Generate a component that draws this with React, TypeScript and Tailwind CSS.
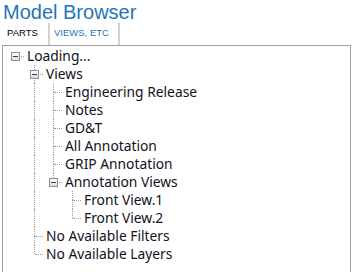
import React from "react";

type Node = { label: string; children?: Node[] };

const tree: Node = {
  label: "Loading...",
  children: [
    {
      label: "Views",
      children: [
        { label: "Engineering Release" },
        { label: "Notes" },
        { label: "GD&T" },
        { label: "All Annotation" },
        { label: "GRIP Annotation" },
        {
          label: "Annotation Views",
          children: [{ label: "Front View.1" }, { label: "Front View.2" }],
        },
      ],
    },
    { label: "No Available Filters" },
    { label: "No Available Layers" },
  ],
};

type Row = { node: Node; depth: number; guides: boolean[]; last: boolean; root: boolean };

function flatten(node: Node, depth: number, guides: boolean[], last: boolean, root: boolean, out: Row[]) {
  out.push({ node, depth, guides, last, root });
  const kids = node.children ?? [];
  kids.forEach((k, i) =>
    flatten(k, depth + 1, root ? guides : [...guides, !last], i === kids.length - 1, false, out)
  );
  return out;
}

function Expander() {
  return (
    <span className="absolute left-[6px] top-[5px] w-[9px] h-[9px] border border-[#919191] bg-gradient-to-b from-white to-[#dcdcdc] flex items-center justify-center">
      <span className="w-[5px] h-px bg-[#2b3a8f]" />
    </span>
  );
}

function TreeRow({ row }: { row: Row }) {
  const hasKids = !!row.node.children?.length;
  return (
    <div className="flex h-[18px] items-center">
      {!row.root && <span className="w-[19px] h-full shrink-0" />}
      {row.guides.map((g, i) => (
        <span key={i} className="relative w-[19px] h-full shrink-0">
          {g && <span className="absolute left-[10px] top-0 bottom-0 border-l border-dotted border-[#a0a0a0]" />}
        </span>
      ))}
      <span className="relative w-[19px] h-full shrink-0">
        {!row.root && (
          <span className="absolute left-[10px] top-0 h-[9px] border-l border-dotted border-[#a0a0a0]" />
        )}
        {!row.root && !row.last && (
          <span className="absolute left-[10px] top-[9px] bottom-0 border-l border-dotted border-[#a0a0a0]" />
        )}
        <span className="absolute left-[11px] top-[9px] w-[8px] border-t border-dotted border-[#a0a0a0]" />
        {hasKids && <Expander />}
      </span>
      <span className="pl-[3px] text-[13.8px] leading-[18px] text-[#111122] whitespace-nowrap">{row.node.label}</span>
    </div>
  );
}

export default function App() {
  const rows = flatten(tree, 0, [], true, true, []);
  return (
    <div className="w-[354px] h-[272px] bg-white overflow-hidden flex flex-col" style={{ fontFamily: '"Noto Sans", sans-serif' }}>
      <div
        className="h-[22px] pl-[3px] pt-[1px] text-[20px] leading-[22px] text-[#1f75b9]"
        style={{ fontFamily: '"Liberation Sans", Arial, sans-serif' }}
      >
        Model Browser
      </div>
      <div
        className="flex h-[23px] pl-[2px] text-[9.5px]"
        style={{ fontFamily: '"Liberation Sans", Arial, sans-serif' }}
      >
        <div className="w-[46px] pl-[5px] flex items-center text-black">PARTS</div>
        <div className="w-[2px] mt-[1px] bg-[#d2d2d2]" />
        <div className="w-[68px] pl-[4px] flex items-center text-[#1f75b9]">VIEWS, ETC</div>
        <div className="w-[2px] mt-[1px] bg-[#d2d2d2]" />
      </div>
      <div className="flex-1 ml-[2px] mr-[3px] border-l border-t border-r border-[#a0a0a0] pt-px pl-[2px]">
        {rows.map((r, i) => (
          <TreeRow key={i} row={r} />
        ))}
      </div>
    </div>
  );
}
